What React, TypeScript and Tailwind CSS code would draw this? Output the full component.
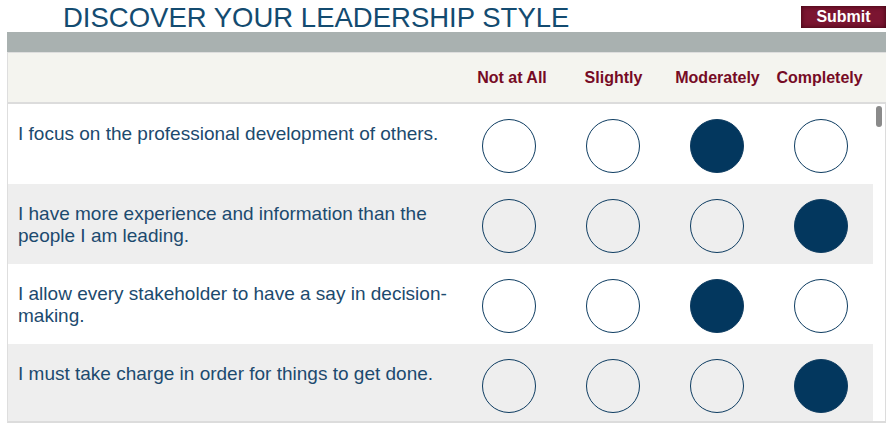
import React from "react";

const questions = [
  { text: "I focus on the professional development of others.", value: 2 },
  { text: "I have more experience and information than the people I am leading.", value: 3 },
  { text: "I allow every stakeholder to have a say in decision-making.", value: 2 },
  { text: "I must take charge in order for things to get done.", value: 3 },
];

const labels = [
  { t: "Not at All", c: "pr-[2px]" },
  { t: "Slightly", c: "pr-[7px]" },
  { t: "Moderately", c: "pr-[7px]" },
  { t: "Completely", c: "pr-[11px]" },
];

export default function App() {
  return (
    <div
      className="w-[894px] h-[424px] bg-white overflow-hidden"
      style={{ fontFamily: '"Liberation Sans", Arial, sans-serif' }}
    >
      {/* Title bar */}
      <div className="h-[32px] flex items-start justify-between">
        <h1 className="ml-[63px] mt-[3px] text-[27.5px] leading-[30px] text-[#134b70] font-normal">
          DISCOVER YOUR LEADERSHIP STYLE
        </h1>
        <button className="mt-[6px] mr-[8px] w-[85px] h-[22px] bg-[#7b1531] text-white font-bold text-[16px] leading-[22px] flex items-center justify-center shadow-[inset_0_0_5px_rgba(50,0,12,0.9)]">
          Submit
        </button>
      </div>

      <div className="ml-[7px] w-[879px]">
        {/* Gray bar */}
        <div className="h-[20px] bg-[#a9b1b0]" />
        {/* Header row */}
        <div className="h-[52px] bg-[#f4f4ef] border-t border-[#dedede] border-l border-l-[#dedede] border-b-2 border-b-[#dcdcdc] flex">
          <div className="w-[453px]" />
          {labels.map((l) => (
            <div
              key={l.t}
              className={`w-[104px] flex items-center justify-center text-[16px] font-bold text-[#760b25] pt-[1px] ${l.c}`}
            >
              {l.t}
            </div>
          ))}
        </div>
        {/* Rows */}
        <div className="h-[319px] border-l border-[#dedede] border-r border-r-[#dcdcdc] border-b-2 border-b-[#dcdcdc] flex overflow-hidden">
          <div className="w-[865px] overflow-hidden">
            {questions.map((q, i) => (
              <div
                key={i}
                className={`h-[80px] flex shrink-0 ${i % 2 === 1 ? "bg-[#eeeeee]" : "bg-white"}`}
              >
                <div className="w-[452px] pl-[10px] pr-[4px] pt-[19px] text-[19px] leading-[22px] text-[#1c4a6e]">
                  {q.text}
                </div>
                {labels.map((l, j) => (
                  <div key={l.t} className="w-[104px] shrink-0 flex justify-center pt-[15px]">
                    <div
                      className={`w-[54px] h-[54px] rounded-full border-[1.5px] border-[#0d3c61] ${
                        q.value === j ? "bg-[#03375e]" : "bg-transparent"
                      }`}
                    />
                  </div>
                ))}
              </div>
            ))}
          </div>
          <div className="flex-1 bg-white relative">
            <div className="absolute left-[3px] top-[2px] w-[6px] h-[21px] rounded-[3px] bg-[#8a8a8a]" />
          </div>
        </div>
      </div>
    </div>
  );
}
